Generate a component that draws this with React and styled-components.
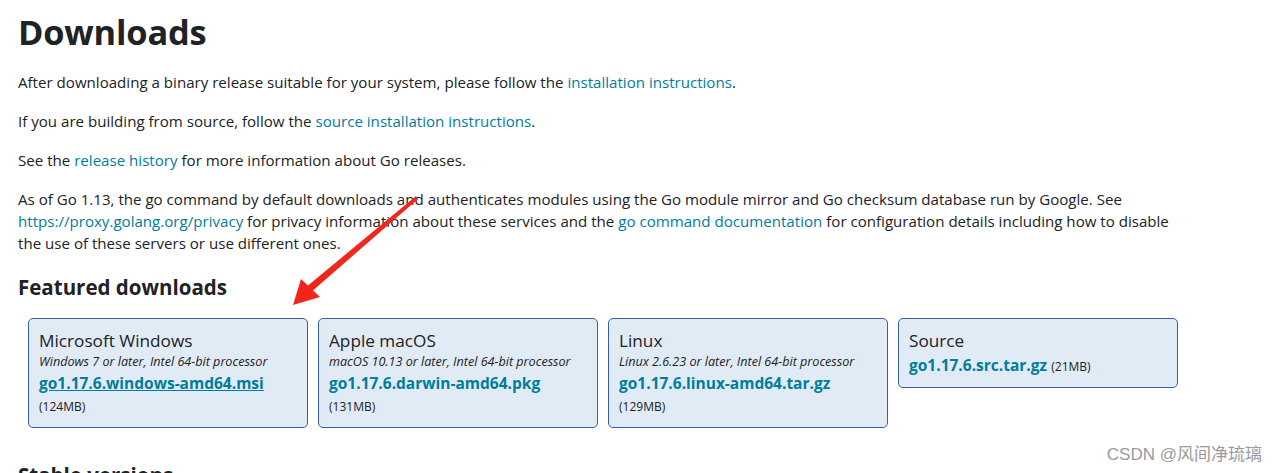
import styled, { createGlobalStyle } from 'styled-components'

const GlobalStyle = createGlobalStyle`
    html, body {
        margin: 0;
        padding: 0;
        background: #fff;
    }
    body {
        font-family: 'Open Sans', 'Noto Sans', sans-serif;
        color: #202224;
        overflow: hidden;
    }
`

const downloads = [
    { os: "Microsoft Windows", req: "Windows 7 or later, Intel 64-bit processor", file: "go1.17.6.windows-amd64.msi", size: "124MB", hover: true },
    { os: "Apple macOS", req: "macOS 10.13 or later, Intel 64-bit processor", file: "go1.17.6.darwin-amd64.pkg", size: "131MB" },
    { os: "Linux", req: "Linux 2.6.23 or later, Intel 64-bit processor", file: "go1.17.6.linux-amd64.tar.gz", size: "129MB" },
    { os: "Source", file: "go1.17.6.src.tar.gz", size: "21MB", inline: true },
]

export default function App() {
    return (
        <Page>
            <GlobalStyle />
            <Title>Downloads</Title>
            <Text>
                After downloading a binary release suitable for your system, please follow the <Link>installation instructions</Link>.
            </Text>
            <Text>
                If you are building from source, follow the <Link>source installation instructions</Link>.
            </Text>
            <Text>
                See the <Link>release history</Link> for more information about Go releases.
            </Text>
            <Text>
                As of Go 1.13, the go command by default downloads and authenticates modules using the Go module mirror and Go checksum database run by Google. See <Link>https://proxy.golang.org/privacy</Link> for privacy information about these services and the <Link>go command documentation</Link> for configuration details including how to disable the use of these servers or use different ones.
            </Text>
            <Heading>Featured downloads</Heading>
            <Cards>
                {downloads.map((d) => (
                    <Card key={d.os}>
                        <Platform>{d.os}</Platform>
                        {d.req && <Requirement>{d.req}</Requirement>}
                        {d.inline ? (
                            <FileRow>
                                <FileLink>{d.file}</FileLink> <Size>({d.size})</Size>
                            </FileRow>
                        ) : (
                            <>
                                <FileRow>
                                    <FileLink $hover={d.hover}>{d.file}</FileLink>
                                </FileRow>
                                <Size $block>({d.size})</Size>
                            </>
                        )}
                    </Card>
                ))}
            </Cards>
            <Heading $next>Stable versions</Heading>

            <Arrow width="140" height="120" viewBox="0 0 140 120">
                <path d="M128 3 L130 6 L22 100 L17 95 Z" fill="#f0261c" />
                <polygon points="5,112 13,86 32,104" fill="#f0261c" />
            </Arrow>
            <Watermark>CSDN @风间净琉璃</Watermark>
        </Page>
    )
}

const Page = styled.div`
    position: relative;
    height: 473px;
    padding: 10px 18px 0;
    box-sizing: border-box;
    display: flex;
    flex-direction: column;
`
const Title = styled.h1`
    margin: 0 0 17px;
    font-size: 34.4px;
    line-height: 44px;
    font-weight: 700;
    letter-spacing: -0.2px;
`
const Text = styled.p`
    margin: 0 0 17px;
    font-size: 15.1px;
    line-height: 22px;
    max-width: 1165px;
`
const Link = styled.a`
    color: #007d9c;
    text-decoration: none;
    cursor: pointer;
`
const Heading = styled.h2`
    margin: ${(p) => (p.$next ? "33px 0 0" : "2px 0 17px")};
    font-size: 20.5px;
    line-height: 28px;
    font-weight: 700;
`
const Cards = styled.div`
    display: flex;
    align-items: flex-start;
    gap: 10px;
    margin-left: 10px;
`
const Card = styled.div`
    width: 280px;
    box-sizing: border-box;
    padding: 10px 10px 11px;
    background: #e0ebf5;
    border: 1px solid #375eab;
    border-radius: 5px;
`
const Platform = styled.div`
    font-size: 17.2px;
    line-height: 24px;
`
const Requirement = styled.div`
    font-size: 12.6px;
    line-height: 18px;
    font-style: italic;
    margin-bottom: 1px;
`
const FileRow = styled.div`
    line-height: 22px;
    margin-top: 1px;
`
const FileLink = styled.a`
    font-size: 15.5px;
    font-weight: 700;
    color: #007d9c;
    text-decoration: ${(p) => (p.$hover ? "underline" : "none")};
    cursor: pointer;
`
const Size = styled.span`
    font-size: 12px;
    line-height: 18px;
    display: ${(p) => (p.$block ? "block" : "inline")};
    margin-top: ${(p) => (p.$block ? "4px" : "0")};
`
const Arrow = styled.svg`
    position: absolute;
    left: 288px;
    top: 193px;
`
const Watermark = styled.div`
    position: absolute;
    right: 15px;
    bottom: 8px;
    font-family: 'Liberation Sans', 'Noto Sans CJK SC', sans-serif;
    font-size: 17px;
    color: #9a9a9a;
    text-shadow: 0 0 1px #fff;
`
